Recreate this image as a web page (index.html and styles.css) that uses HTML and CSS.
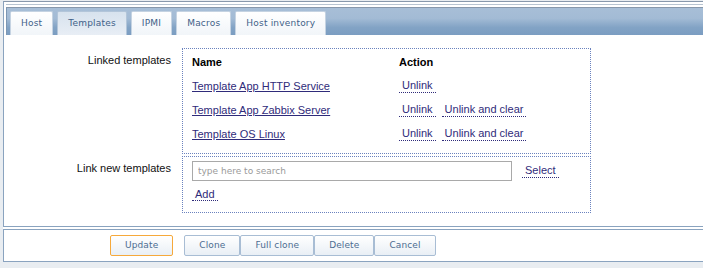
FILE: index.html
```html
<!DOCTYPE html>
<html>
<head>
<meta charset="utf-8">
<link rel="stylesheet" href="styles.css">
</head>
<body>
<div class="page">
  <div class="frame">
    <div class="rule"></div>
    <div class="tabbar">
      <div class="tab">Host</div>
      <div class="tab active">Templates</div>
      <div class="tab">IPMI</div>
      <div class="tab">Macros</div>
      <div class="tab">Host inventory</div>
    </div>
    <div class="form">
      <div class="label">Linked templates</div>
      <div class="box linked">
        <div class="grid">
          <div class="th">Name</div>
          <div class="th">Action</div>
          <div class="cell"><a class="name" href="#">Template App HTTP Service</a></div>
          <div class="cell acts"><a class="act" href="#">Unlink</a></div>
          <div class="cell"><a class="name" href="#">Template App Zabbix Server</a></div>
          <div class="cell acts"><a class="act" href="#">Unlink</a><a class="act" href="#">Unlink and clear</a></div>
          <div class="cell"><a class="name" href="#">Template OS Linux</a></div>
          <div class="cell acts"><a class="act" href="#">Unlink</a><a class="act" href="#">Unlink and clear</a></div>
        </div>
      </div>
      <div class="label">Link new templates</div>
      <div class="box newt">
        <div class="search">
          <input class="input" type="text" placeholder="type here to search">
          <a class="act" href="#">Select</a>
        </div>
        <div class="addrow"><a class="act" href="#">Add</a></div>
      </div>
    </div>
  </div>
  <div class="buttons">
    <button class="btn primary">Update</button>
    <div class="group">
      <button class="btn">Clone</button>
      <button class="btn">Full clone</button>
      <button class="btn">Delete</button>
      <button class="btn">Cancel</button>
    </div>
  </div>
</div>
</body>
</html>
```

FILE: styles.css
```css
html, body {
  margin: 0;
  padding: 0;
  overflow: hidden;
  background: #e9edf1;
}
body {
  font-family: "Liberation Sans", Arial, sans-serif;
  font-size: 11px;
  line-height: 13px;
  color: #1a1a1a;
}
.page {
  margin-left: 3px;
  width: 760px;
  background: #ffffff;
}
.frame {
  margin-top: 1px;
  border-top: 1px solid #8797ab;
  border-left: 1px solid #8aa3bf;
  border-bottom: 1px solid #8aa3bf;
  padding-top: 2px;
}
.rule {
  margin-left: 2px;
  border-top: 1px solid #b8c4d1;
  margin-bottom: 2px;
}
.tabbar {
  margin-left: 2px;
  display: flex;
  align-items: flex-end;
  gap: 4px;
  height: 27px;
  padding-left: 3px;
  border-top: 1px solid #8797ab;
  border-left: 1px solid #7d97b3;
  background: linear-gradient(#a7bed7 0%, #a3bbd5 38%, #82a3c5 72%, #7b9dc1 100%);
}
.tab {
  height: 23px;
  line-height: 23px;
  padding: 0 10px;
  border: 1px solid #c5d3e2;
  border-bottom: none;
  border-radius: 2px 2px 0 0;
  background: linear-gradient(#ffffff, #f1f5f9);
  font-family: "DejaVu Sans", sans-serif;
  font-size: 9px;
  letter-spacing: 0.2px;
  color: #3f6188;
}
.tab.active {
  border-color: #b2c5d9;
  background: linear-gradient(#d7e2ee, #e8eef5);
}
.form {
  display: grid;
  grid-template-columns: 167px 409px;
  column-gap: 11px;
  row-gap: 2px;
  padding: 13px 0 13px 0;
}
.label {
  text-align: right;
  padding-top: 6px;
  color: #111;
}
.box {
  border: 1px dotted #6a82be;
}
.linked {
  padding: 1px 9px 7px 9px;
}
.grid {
  display: grid;
  grid-template-columns: 207px auto;
  grid-auto-rows: 24px;
}
.th {
  font-weight: bold;
  color: #000;
  display: flex;
  align-items: center;
}
.cell {
  display: flex;
  align-items: center;
}
.acts {
  gap: 6px;
}
a.name {
  color: #2f2b7a;
  text-decoration: underline;
}
a.act {
  color: #2f2b7a;
  text-decoration: none;
  padding: 0 3px;
  border-bottom: 1px dotted #2f2b7a;
}
.newt {
  padding: 4px 9px 11px 9px;
}
.search {
  display: flex;
  align-items: center;
  gap: 10px;
}
.input {
  box-sizing: border-box;
  width: 320px;
  height: 20px;
  margin: 0;
  padding: 0 5px;
  border: 1px solid #a9a9a9;
  border-radius: 0;
  outline: none;
  background: #fff;
  font-family: "DejaVu Sans", sans-serif;
  font-size: 9px;
  color: #333;
}
.input::placeholder {
  color: #9a9a9a;
}
.addrow {
  margin-top: 7px;
  height: 13px;
}
.buttons {
  margin-top: 2px;
  border-top: 1px solid #8aa3bf;
  border-left: 1px solid #8aa3bf;
  border-bottom: 1px solid #8aa3bf;
  padding: 5px 0 5px 106px;
  display: flex;
  gap: 11px;
}
.group {
  display: flex;
}
.btn {
  box-sizing: border-box;
  height: 21px;
  margin: 0;
  padding: 0 14px;
  border: 1px solid #a8bdd4;
  border-radius: 2px;
  background: linear-gradient(#ffffff, #e9eff5);
  font-family: "DejaVu Sans", sans-serif;
  font-size: 9px;
  letter-spacing: 0.12px;
  line-height: 19px;
  color: #4d6d91;
}
.btn.primary {
  border-color: #f6a93b;
}
```
